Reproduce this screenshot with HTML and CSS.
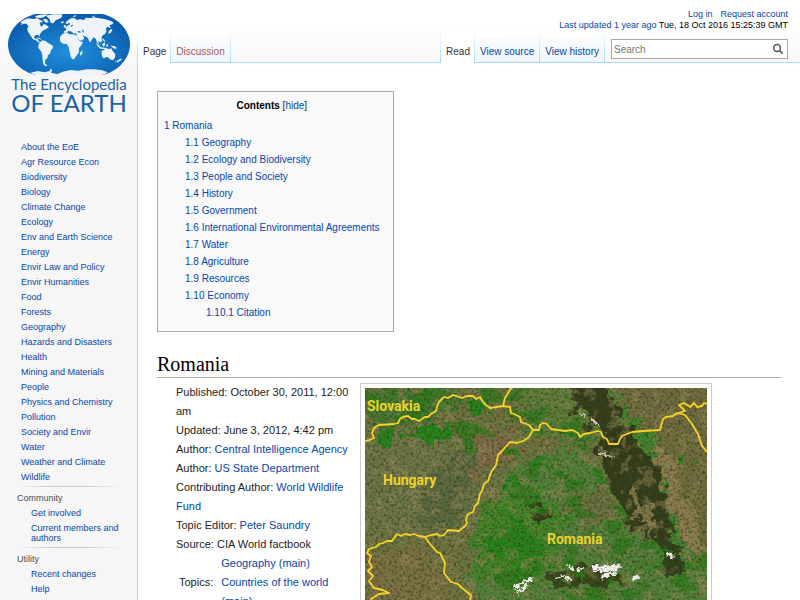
FILE: index.html
```html
<!DOCTYPE html>
<html lang="en">
<head>
    <meta charset="UTF-8">
    <meta name="viewport" content="width=device-width, initial-scale=1.0">
    <title>Romania - The Encyclopedia of Earth</title>
    <link rel="stylesheet" href="styles.css">
</head>
<body>
    <div class="page">
        <aside class="sidebar">
            <a class="logo" href="#" aria-label="The Encyclopedia of Earth">
                <svg class="globe" viewBox="24 42 366 183" aria-hidden="true">
                    <defs>
                        <radialGradient id="sea" cx="50%" cy="62%" r="60%">
                            <stop offset="0" stop-color="#2191dc"/>
                            <stop offset="1" stop-color="#0a5cae"/>
                        </radialGradient>
                        <clipPath id="oval"><path d="M108 42H306C348 50 390 88 390 133C390 178 350 217 306 225H108C64 217 24 178 24 133C24 88 66 50 108 42Z"/></clipPath>
                    </defs>
                    <g clip-path="url(#oval)">
                        <rect x="24" y="42" width="366" height="183" fill="url(#sea)"/>
                        <g fill="#edf3f9">
                            <path d="M60 67L72 60L84 55L100 57L112 54L120 60L128 62L126 70L120 74L124 80L132 72L138 74L147 82L137 88L128 92L123 98L119 104L120 111L115 105L106 105L102 111L106 117L113 115L114 120L121 128L117 128L107 121L98 117L93 109L88 101L83 94L82 86L85 79L79 71L70 71L62 76L66 69Z"/>
                            <path d="M104 49L118 45L135 43L144 44L132 51L123 54L112 53Z M130 56L140 58L146 65L139 69L132 63Z"/>
                            <path d="M138 47L158 43L187 43L186 51L177 57L167 61L160 70L152 69L149 58Z"/>
                            <path d="M120 127L127 121L137 123L144 129L151 133L159 138L158 145L153 151L150 161L144 165L142 174L136 179L135 190L142 197L137 199L130 193L128 180L127 166L124 155L115 144L115 136Z"/>
                            <path d="M192 93L197 92L199 86L195 84L201 78L210 73L208 68L199 73L197 67L206 59L215 54L224 55L230 60L240 58L252 60L258 53L270 54L284 52L298 55L313 57L327 61L340 67L338 73L329 75L332 85L323 80L317 86L320 93L315 102L308 106L304 113L307 121L302 128L297 122L295 130L300 139L292 129L287 116L281 112L275 119L270 128L265 117L261 111L253 109L247 106L253 115L246 122L237 119L230 108L230 101L220 100L214 97L205 92L201 98L193 99Z"/>
                            <path d="M188 101L201 98L209 103L221 103L230 107L237 121L244 125L249 127L243 137L237 144L236 158L229 167L223 176L216 178L212 169L209 155L206 141L200 132L188 131L180 123L180 112Z"/>
                            <path d="M305 153L313 149L320 145L328 148L333 144L338 153L346 162L345 173L338 181L330 178L323 171L309 175L305 165Z"/>
                            <path d="M288 128L296 136L303 142L318 144L319 147L301 146L292 137Z M306 133L314 127L316 134L311 140Z M319 134L325 132L323 139L319 142Z M331 137L343 138L352 145L343 146Z M307 113L314 121L315 127L309 121Z M327 93L335 86L337 90L332 99L324 102Z M244 154L248 151L246 163L241 168L240 160Z M351 183L359 177L366 176L363 181L351 188Z M346 181L350 184L347 187Z M192 75L197 75L198 83L191 82Z M183 65L191 64L190 69L183 70Z M108 113L119 114L126 119L119 118Z M217 48L231 46L224 51Z M275 50L286 46L281 51Z"/>
                            <path d="M91 218L113 213L134 217L149 213L153 205L156 211L153 218L172 222L188 215L212 210L235 212L260 208L284 208L306 211L324 217L305 226H107Z"/>
                        </g>
                        <g fill="#1a79c4">
                            <path d="M119 68L126 66L129 71L124 76L120 74Z M232 94L239 93L244 97L236 98Z M247 89L251 90L251 100L247 95Z M210 93L218 97L217 100L209 96Z M211 78L218 74L217 67L219 76L215 81Z"/>
                        </g>
                    </g>
                </svg>
                <span class="logo-top">The Encyclopedia</span>
                <span class="logo-bottom">OF EARTH</span>
            </a>
            <nav class="topics-nav">
                <ul>
                    <li><a href="#">About the EoE</a></li>
                    <li><a href="#">Agr Resource Econ</a></li>
                    <li><a href="#">Biodiversity</a></li>
                    <li><a href="#">Biology</a></li>
                    <li><a href="#">Climate Change</a></li>
                    <li><a href="#">Ecology</a></li>
                    <li><a href="#">Env and Earth Science</a></li>
                    <li><a href="#">Energy</a></li>
                    <li><a href="#">Envir Law and Policy</a></li>
                    <li><a href="#">Envir Humanities</a></li>
                    <li><a href="#">Food</a></li>
                    <li><a href="#">Forests</a></li>
                    <li><a href="#">Geography</a></li>
                    <li><a href="#">Hazards and Disasters</a></li>
                    <li><a href="#">Health</a></li>
                    <li><a href="#">Mining and Materials</a></li>
                    <li><a href="#">People</a></li>
                    <li><a href="#">Physics and Chemistry</a></li>
                    <li><a href="#">Pollution</a></li>
                    <li><a href="#">Society and Envir</a></li>
                    <li><a href="#">Water</a></li>
                    <li><a href="#">Weather and Climate</a></li>
                    <li><a href="#">Wildlife</a></li>
                </ul>
            </nav>
            <nav class="portal">
                <h3>Community</h3>
                <ul>
                    <li><a href="#">Get involved</a></li>
                    <li><a href="#">Current members and authors</a></li>
                </ul>
            </nav>
            <nav class="portal">
                <h3>Utility</h3>
                <ul>
                    <li><a href="#">Recent changes</a></li>
                    <li><a href="#">Help</a></li>
                </ul>
            </nav>
        </aside>

        <div class="main">
            <header class="header">
                <div class="personal">
                    <div class="account"><a href="#">Log in</a><a href="#">Request account</a></div>
                    <div class="updated"><a href="#">Last updated 1 year ago</a> Tue, 18 Oct 2016 15:25:39 GMT</div>
                </div>
                <div class="tab-row">
                    <nav class="tabs">
                        <a class="tab selected" href="#">Page</a>
                        <a class="tab new" href="#">Discussion</a>
                    </nav>
                    <nav class="tabs views">
                        <a class="tab selected" href="#">Read</a>
                        <a class="tab" href="#">View source</a>
                        <a class="tab" href="#">View history</a>
                    </nav>
                    <form class="search">
                        <input type="text" placeholder="Search" aria-label="Search">
                        <button type="submit" aria-label="Go">
                            <svg viewBox="0 0 12 12" width="12" height="12"><circle cx="5" cy="5" r="3.4"/><path d="M7.6 7.6L10.6 10.6"/></svg>
                        </button>
                    </form>
                </div>
            </header>

            <main class="content">
                <div class="toc">
                    <div class="toc-title"><h2>Contents</h2> [<a href="#">hide</a>]</div>
                    <ul>
                        <li><a href="#">1 Romania</a>
                            <ul>
                                <li><a href="#">1.1 Geography</a></li>
                                <li><a href="#">1.2 Ecology and Biodiversity</a></li>
                                <li><a href="#">1.3 People and Society</a></li>
                                <li><a href="#">1.4 History</a></li>
                                <li><a href="#">1.5 Government</a></li>
                                <li><a href="#">1.6 International Environmental Agreements</a></li>
                                <li><a href="#">1.7 Water</a></li>
                                <li><a href="#">1.8 Agriculture</a></li>
                                <li><a href="#">1.9 Resources</a></li>
                                <li><a href="#">1.10 Economy</a>
                                    <ul>
                                        <li><a href="#">1.10.1 Citation</a></li>
                                    </ul>
                                </li>
                            </ul>
                        </li>
                    </ul>
                </div>

                <h1>Romania</h1>
                <div class="intro">
                    <div class="meta">
                        <p>Published: October 30, 2011, 12:00 am</p>
                        <p>Updated: June 3, 2012, 4:42 pm</p>
                        <p>Author: <a href="#">Central Intelligence Agency</a></p>
                        <p>Author: <a href="#">US State Department</a></p>
                        <p>Contributing Author: <a href="#">World Wildlife Fund</a></p>
                        <p>Topic Editor: <a href="#">Peter Saundry</a></p>
                        <p>Source: CIA World factbook</p>
                        <div class="topics">
                            <span>Topics:</span>
                            <div>
                                <a href="#">Geography (main)</a><br>
                                <a href="#">Countries of the world (main)</a>
                            </div>
                        </div>
                    </div>
                    <figure class="map">
                        <svg viewBox="0 0 342 250" role="img" aria-label="Satellite map of Romania">
                            <defs>
                                <filter id="rough" x="-10%" y="-10%" width="120%" height="120%">
                                    <feTurbulence type="fractalNoise" baseFrequency="0.07" numOctaves="4" seed="4" result="n"/>
                                    <feDisplacementMap in="SourceGraphic" in2="n" scale="34" xChannelSelector="R" yChannelSelector="G"/>
                                </filter>
                                <filter id="snowy" x="-10%" y="-30%" width="120%" height="160%">
                                    <feTurbulence type="fractalNoise" baseFrequency="0.25" numOctaves="2" seed="9" result="n"/>
                                    <feDisplacementMap in="SourceGraphic" in2="n" scale="9" xChannelSelector="R" yChannelSelector="G"/>
                                </filter>
                                <filter id="greens" x="0" y="0" width="100%" height="100%" color-interpolation-filters="sRGB">
                                    <feTurbulence type="fractalNoise" baseFrequency="0.045 0.06" numOctaves="5" seed="12"/>
                                    <feColorMatrix values="0 0 0 0 0.19  0 0 0 0 0.48  0 0 0 0 0.11  9 0 0 0 -4.9"/>
                                    <feComposite in2="SourceAlpha" operator="in"/>
                                </filter>
                                <filter id="tans" x="0" y="0" width="100%" height="100%" color-interpolation-filters="sRGB">
                                    <feTurbulence type="fractalNoise" baseFrequency="0.09" numOctaves="4" seed="31"/>
                                    <feColorMatrix values="0 0 0 0 0.58  0 0 0 0 0.53  0 0 0 0 0.34  7 0 0 0 -3.7"/>
                                    <feComposite in2="SourceAlpha" operator="in"/>
                                </filter>
                                <filter id="grain" x="0" y="0" width="100%" height="100%" color-interpolation-filters="sRGB">
                                    <feTurbulence type="fractalNoise" baseFrequency="0.37" numOctaves="3" seed="7"/>
                                    <feColorMatrix values="0 0 0 0 0.15  0 0 0 0 0.2  0 0 0 0 0.06  3 0 0 0 -1.4"/>
                                </filter>
                            </defs>
                            <rect width="342" height="250" fill="#6f7342"/>
                            <g filter="url(#rough)">
                                <!-- plains -->
                                <path d="M-20 50H40L90 60L130 40L150 30L140 90L110 140L60 150H-20Z" fill="#6e7546"/>
                                <path d="M115 45L150 40L155 65L125 80L105 95Z" fill="#7e6a44"/>
                                <path d="M70 80L110 60L100 120L80 150L55 130Z" fill="#5c6b42"/>
                                <path d="M-10 165L50 155L75 180L85 215L30 225H-10Z" fill="#7b6f45"/>
                                <!-- Transylvania and the southern foothills -->
                                <path d="M150 70L210 60L240 90L270 150L355 150V260H130L100 190L120 130Z" fill="#55803a"/>
                                <path d="M110 130L150 95L200 120L195 165L160 200L110 190Z" fill="#45842c"/>
                                <path d="M200 110L240 100L255 130L220 145Z" fill="#6b7041"/>
                                <path d="M0 5L80 0L110 10L70 30L0 40Z" fill="#4a7830"/>
                                <path d="M145 -10H230L300 10L290 40L240 60L170 50Z" fill="#5b7c38"/>
                                <!-- Moldova -->
                                <path d="M260 -10H355V170L320 160L290 100L250 40Z" fill="#706c40"/>
                                <path d="M240 25L262 25L290 50L305 120L320 155L300 190L280 130L260 80Z" fill="#42832e"/>
                                <path d="M285 60L300 65L330 130L340 200L325 160Z" fill="#8c7d50"/>
                                <!-- Carpathians -->
                                <path d="M198 -12L228 -10L262 35L292 80L308 130L304 160L272 144L248 108L234 70L238 48L212 20Z" fill="#353d1f"/>
                                <path d="M262 96L274 104L288 132L287 152L270 128Z" fill="#807449"/>
                                <path d="M160 110L185 120L188 135L170 132Z" fill="#353a1b"/>
                                <path d="M183 177L250 181L262 196L225 202L185 195Z" fill="#38461c"/>
                                <path d="M298 155L316 160L320 186L300 190Z" fill="#333f1b"/>
                            </g>
                            <rect width="342" height="250" filter="url(#tans)" opacity="0.5"/>
                            <path d="M0 0H195L225 50L240 90L270 140L300 150L342 160V250H110L125 135L152 65L110 80L85 40L0 60Z" filter="url(#greens)" opacity="0.8"/>
                            <g filter="url(#rough)" fill="#2c821d">
                                <path d="M14 37L30 37L32 48L18 56Z M40 45L60 36L86 36L84 50L50 54Z M104 12L122 14L116 30L108 28Z"/>
                                <path d="M144 90L160 96L156 103L143 98Z M115 150L155 140L185 160L160 165L120 160Z M135 120L160 132L154 140Z M165 70L182 72L177 86L168 83Z M312 65L325 68L320 82L310 80Z M145 180L170 178L175 190L148 192Z"/>
                            </g>
                            <rect width="342" height="250" filter="url(#grain)" opacity="0.6"/>
                            <g filter="url(#snowy)" fill="none" stroke="#eeebe8" stroke-linecap="round">
                                <path d="M150 200L159 193L166 192M153 204L162 197" stroke-width="3"/>
                                <path d="M190 190L199 188L206 192M201 177L211 182L218 181" stroke-width="2"/>
                                <path d="M228 179H255M230 183L251 182M238 188L249 186" stroke-width="3"/>
                                <path d="M268 193L272 188M305 166L307 170" stroke-width="3"/>
                                <path d="M213 25L220 27M226 31L234 38M234 65L246 69" stroke="#d8c9bd" stroke-width="2"/>
                            </g>
                            <g class="borders">
                                <path d="M-4 54L5 52L9 50L7 45L9 40L14 37L29 36L33 35L35 31L38 29L43 28L47 31L50 31L54 33L60 29L63 29L66 26L71 23L72 19L74 14L79 9L83 10L88 7L97 10L102 8L108 8L111 11L115 9L118 14L121 17L125 20L138 18L145 19L146 25L149 26L155 29L156 34L164 37L168 42L174 42L175 37L178 35L182 36L186 41L193 42L200 43L207 42L213 45L215 49L219 46L225 45L233 43L236 44L238 49L242 51L244 56L253 56L255 51L257 48L267 44L278 43L295 42L298 31L301 29L308 28L312 25"/>
                                <path d="M312 25L320 27L327 36L333 46L337 58L343 65"/>
                                <path d="M311 26L320 23L314 17L319 15L325 19L329 15L332 19L337 18L339 15L343 16"/>
                                <path d="M138 18L140 10L145 2L150 -4"/>
                                <path d="M168 42L164 49L158 53L152 55L145 54L138 62L133 67L131 77L127 83L125 87L123 93L119 96L117 103L115 106L113 115L110 118L108 124L103 126L101 132L102 135L100 138L94 143L83 142L79 147L75 148L72 146L66 147L60 149L54 148L49 146L45 147L40 146L36 148L32 146L27 153L22 153L18 155L14 156L11 159L4 161L2 165L6 168L4 174L7 179L3 183L8 188L4 193L9 200L18 202L24 205L14 206L6 211L10 219L4 228L8 250"/>
                                <path d="M60 149L65 156L72 164L75 165L78 171L80 175L79 185L86 194L93 196L97 200L106 207L104 221L112 230L118 240L128 250"/>
                            </g>
                            <g class="labels">
                                <text x="2" y="23">Slovakia</text>
                                <text x="18" y="97">Hungary</text>
                                <text x="182" y="156">Romania</text>
                            </g>
                        </svg>
                    </figure>
                </div>
            </main>
        </div>
    </div>
</body>
</html>
```
FILE: styles.css
```css
body {
    margin: 0;
    overflow: hidden;
    font-family: "Liberation Sans", Arial, sans-serif;
    font-size: 10px;
    color: #222;
    background: #f6f6f6 linear-gradient(#fff 30%, #f6f6f6) top / 100% 72px no-repeat;
}
a {
    color: #0645ad;
    text-decoration: none;
}
a:hover {
    text-decoration: underline;
}
ul {
    list-style: none;
    margin: 0;
    padding: 0;
}
h1, h2, h3, p, figure {
    margin: 0;
    font-weight: normal;
}
.page {
    display: grid;
    grid-template-columns: 137px minmax(0, 1fr);
    min-height: 100vh;
}

/* sidebar */
.sidebar {
    font-size: 9px;
    line-height: 15px;
}
.logo {
    display: flex;
    flex-direction: column;
    align-items: center;
    padding: 14px 7px 0 8px;
    color: #1763a8;
}
.logo:hover {
    text-decoration: none;
}
.globe {
    width: 122px;
    height: 61px;
}
.logo-top {
    font-family: Lato, sans-serif;
    font-size: 15px;
    line-height: 18px;
}
.logo-bottom {
    font-family: Lato, sans-serif;
    font-size: 24px;
    line-height: 20px;
}
.topics-nav {
    padding: 27px 10px 0 21px;
}
.portal {
    margin: 1px 14px 0 17px;
    background: linear-gradient(to right, transparent, #c8ccd1 33%, #c8ccd1 66%, transparent) top / 100% 1px no-repeat;
}
.portal h3 {
    padding-top: 4px;
    font-size: 9px;
    line-height: 16px;
    color: #4d4d4d;
}
.portal ul {
    padding-left: 14px;
}
.portal li {
    padding: 2px 0 3px;
    line-height: 10px;
}

/* header */
.main {
    display: flex;
    flex-direction: column;
}
.header {
    border-bottom: 1px solid #a7d7f9;
}
.personal {
    padding: 9px 12px 0;
    font-size: 9px;
    line-height: 11px;
    text-align: right;
    color: #000;
}
.account {
    display: flex;
    justify-content: flex-end;
    gap: 8px;
}
.tab-row {
    display: flex;
    height: 31px;
}
.tabs {
    display: flex;
}
.tabs::before {
    content: "";
    width: 1px;
    margin-bottom: -1px;
    background: linear-gradient(#fff, #a7d7f9);
}
.views {
    margin-left: auto;
}
.tab {
    padding: 15px 5px 0;
    font-size: 10px;
    line-height: 12px;
    border-right: 1px solid;
    border-image: linear-gradient(#fff, #a7d7f9) 1;
    background: linear-gradient(#fff, #eef5f9);
}
.tab.selected {
    margin-bottom: -1px;
    padding-right: 4px;
    background: #fff;
    color: #333;
}
.tab.new {
    color: #a55858;
}
.search {
    display: flex;
    width: 175px;
    height: 18px;
    margin: 8px 12px 0 6px;
    border: 1px solid #aaa;
    background: #fff;
}
.search input {
    flex: 1;
    min-width: 0;
    padding: 0 2px;
    border: 0;
    outline: 0;
    background: none;
    font: 10px "Liberation Sans", Arial, sans-serif;
}
.search input::placeholder {
    color: #757575;
}
.search button {
    display: flex;
    align-items: center;
    padding: 0 3px;
    border: 0;
    background: none;
}
.search svg {
    fill: none;
    stroke: #555;
    stroke-width: 1.5;
}

/* article */
.content {
    flex: 1;
    padding: 28px 19px 0;
    border-left: 1px solid #a7d7f9;
    background: #fff;
}
.toc {
    width: max-content;
    padding: 5px 13px 10px 6px;
    border: 1px solid #aaa;
    background: #f9f9f9;
    line-height: 17px;
}
.toc-title {
    margin-bottom: 3px;
    text-align: center;
}
.toc h2 {
    display: inline;
    font-size: 10px;
    font-weight: bold;
    color: #000;
}
.toc ul ul {
    padding-left: 21px;
}
h1 {
    margin-top: 20px;
    padding-bottom: 1px;
    border-bottom: 1px solid #aaa;
    font-family: "Liberation Serif", "Times New Roman", serif;
    font-size: 20px;
    line-height: 24px;
    color: #000;
}
.intro {
    display: flex;
    align-items: flex-start;
    gap: 10px;
    padding: 5px 0 0 19px;
}
.meta {
    flex: 0 0 174px;
    font-size: 11px;
    line-height: 19px;
}
.topics {
    display: flex;
    align-items: center;
    gap: 8px;
    padding-left: 3px;
}
.map {
    flex: 0 1 342px;
    padding: 4px;
    border: 1px solid #ccc;
}
.map svg {
    display: block;
    width: 100%;
}
.borders {
    fill: none;
    stroke: #f5d327;
    stroke-width: 1.8;
    stroke-linejoin: round;
}
.labels {
    fill: #e9d42c;
    font-family: Roboto, "Liberation Sans", sans-serif;
    font-size: 14px;
    font-weight: bold;
}
```
